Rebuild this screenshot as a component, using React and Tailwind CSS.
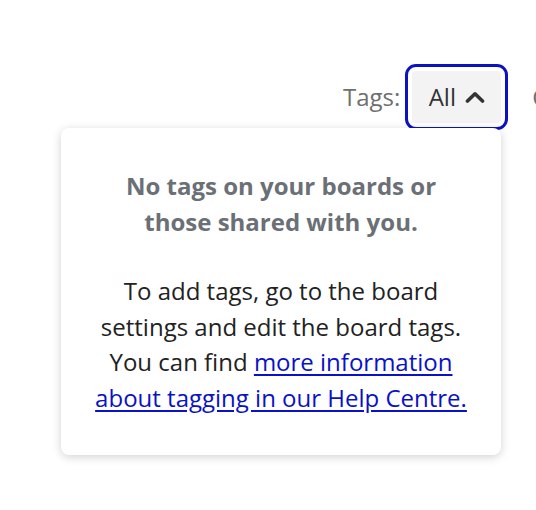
import { useState } from 'react';

function ChevronUp() {
  return (
    <svg width="20" height="12" viewBox="0 0 20 12" fill="none" className="ml-[9px]">
      <path d="M2.5 10 L10 2.8 L17.5 10" stroke="#333333" strokeWidth="3.6" strokeLinecap="round" strokeLinejoin="round" />
    </svg>
  );
}

export default function App() {
  const [open, setOpen] = useState(true);

  return (
    <div className="w-[536px] h-[510px] overflow-hidden bg-white font-['Open_Sans',sans-serif]">
      <div className="flex items-center pt-[71px] pl-[343px] whitespace-nowrap">
        <span className="shrink-0 text-[24px] leading-[30px] text-[#6f6f6f]">Tags:</span>
        <button
          onClick={() => setOpen(!open)}
          className="shrink-0 ml-[12px] flex items-center h-[52px] w-[89px] justify-center rounded-[4px] bg-[#f3f3f3] text-[24px] text-[#333333] outline-[3px] outline-solid outline-[#0a12c2] outline-offset-[4px]"
        >
          All
          <ChevronUp />
        </button>
        <span className="shrink-0 ml-[31px] text-[24px] leading-[30px] text-[#6f6f6f]">Created by:</span>
      </div>

      {open && (
        <div className="relative z-10 ml-[61px] mt-[5px] w-[440px] rounded-[8px] bg-white px-[30px] pt-[40px] pb-[40px] text-center shadow-[0_2px_10px_rgba(0,0,0,0.18)]">
          <p className="text-[24px] leading-[36px] font-bold text-[#6b6f76]">
            No tags on your boards or
            <br />
            those shared with you.
          </p>
          <p className="mt-[33px] text-[24px] leading-[35.5px] text-[#222222]">
            To add tags, go to the board settings and edit the board tags. You can find{' '}
            <a href="#" className="text-[#0a12c8] underline underline-offset-[3px]">
              more information about tagging in our Help Centre.
            </a>
          </p>
        </div>
      )}
    </div>
  );
}
